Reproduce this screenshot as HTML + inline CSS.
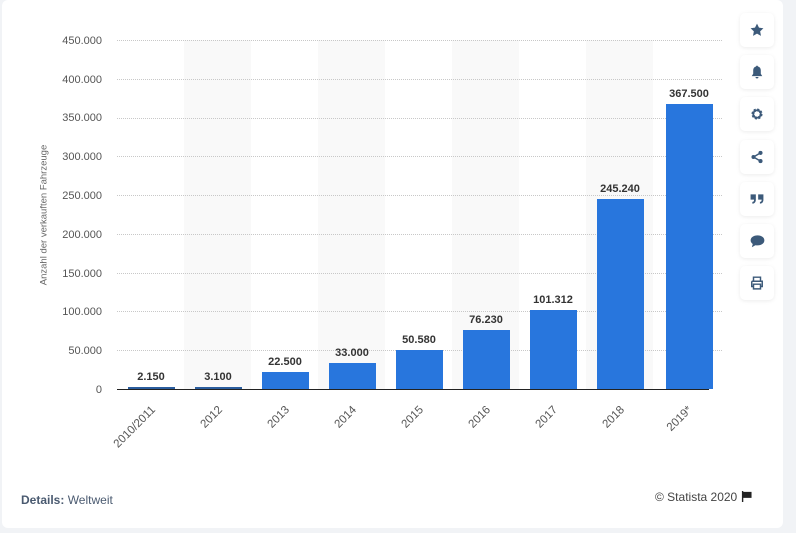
<!DOCTYPE html>
<html><head><meta charset="utf-8"><style>
body{margin:0;width:796px;height:533px;background:#f1f3f6;font-family:"Liberation Sans",sans-serif;position:relative;overflow:hidden}
.card{position:absolute;left:2px;top:0;width:781px;height:528px;background:#fff;border-radius:6px}
.a{position:absolute}
.yl{position:absolute;right:694px;font-size:11px;color:#555;transform:translateY(-50%)}
.g{position:absolute;left:117px;width:605px;border-top:1px dotted #c8c8c8;height:0}
.band{position:absolute;top:40px;height:349px;width:67px;background:#f9f9f9}
.bar{position:absolute;width:47px;background:#2876dd}
.v{position:absolute;width:80px;text-align:center;font-size:11px;font-weight:bold;color:#333}
.xl{position:absolute;font-size:11.5px;color:#555;transform-origin:right top;transform:rotate(-45deg);white-space:nowrap;text-align:right}
.btn{position:absolute;left:740px;width:34px;height:34px;background:#fff;border-radius:5px;box-shadow:0 1px 4px rgba(0,0,0,.08);display:flex;align-items:center;justify-content:center}
</style></head><body>
<div class="card"></div>
<div class="band" style="left:184px"></div>
<div class="band" style="left:318px"></div>
<div class="band" style="left:452px"></div>
<div class="band" style="left:586px"></div>
<div class="g" style="top:40px"></div><div class="yl" style="top:41px">450.000</div>
<div class="g" style="top:79px"></div><div class="yl" style="top:80px">400.000</div>
<div class="g" style="top:118px"></div><div class="yl" style="top:118px">350.000</div>
<div class="g" style="top:156px"></div><div class="yl" style="top:157px">300.000</div>
<div class="g" style="top:195px"></div><div class="yl" style="top:196px">250.000</div>
<div class="g" style="top:234px"></div><div class="yl" style="top:235px">200.000</div>
<div class="g" style="top:273px"></div><div class="yl" style="top:274px">150.000</div>
<div class="g" style="top:311px"></div><div class="yl" style="top:312px">100.000</div>
<div class="g" style="top:350px"></div><div class="yl" style="top:351px">50.000</div>
<div class="yl" style="top:390px">0</div>
<div class="a" style="left:44px;top:215px;transform:translate(-50%,-50%) rotate(-90deg);font-size:9.5px;color:#666;white-space:nowrap">Anzahl der verkauften Fahrzeuge</div>

<div class="bar" style="left:128px;top:387px;height:2px;background:#2a5d9e"></div><div class="v" style="left:111px;top:371px">2.150</div>
<div class="bar" style="left:195px;top:387px;height:2px;background:#2a5d9e"></div><div class="v" style="left:178px;top:371px">3.100</div>
<div class="bar" style="left:262px;top:372px;height:17px"></div><div class="v" style="left:245px;top:356px">22.500</div>
<div class="bar" style="left:329px;top:363px;height:26px"></div><div class="v" style="left:312px;top:347px">33.000</div>
<div class="bar" style="left:396px;top:350px;height:39px"></div><div class="v" style="left:379px;top:334px">50.580</div>
<div class="bar" style="left:463px;top:330px;height:59px"></div><div class="v" style="left:446px;top:314px">76.230</div>
<div class="bar" style="left:530px;top:310px;height:79px"></div><div class="v" style="left:513px;top:294px">101.312</div>
<div class="bar" style="left:597px;top:199px;height:190px"></div><div class="v" style="left:580px;top:183px">245.240</div>
<div class="bar" style="left:666px;top:104px;height:285px"></div><div class="v" style="left:649px;top:88px">367.500</div>
<div class="a" style="left:117px;top:389px;width:592px;height:1px;background:#222"></div>

<div class="xl" style="right:646px;top:404px">2010/2011</div>
<div class="xl" style="right:579px;top:404px">2012</div>
<div class="xl" style="right:512px;top:404px">2013</div>
<div class="xl" style="right:445px;top:404px">2014</div>
<div class="xl" style="right:378px;top:404px">2015</div>
<div class="xl" style="right:311px;top:404px">2016</div>
<div class="xl" style="right:244px;top:404px">2017</div>
<div class="xl" style="right:177px;top:404px">2018</div>
<div class="xl" style="right:110px;top:404px">2019*</div>

<div class="a" style="left:21px;top:493px;font-size:12px;color:#4a5a70"><b>Details:</b> Weltweit</div>
<div class="a" style="left:655px;top:490px;font-size:12px;color:#444">© Statista 2020 <svg width="11" height="11" viewBox="0 0 12 12" style="vertical-align:-1px"><path fill="#222" d="M1 0h1.5v12H1zM2.5 1h9v6.5h-9z"/></svg></div>

<div class="btn" style="top:13px"><svg width="14" height="14" viewBox="0 0 24 24"><path fill="#3c5a7a" d="M12 1l3.4 7 7.6 1-5.6 5.3 1.4 7.7L12 18.3 5.2 22l1.4-7.7L1 9l7.6-1z"/></svg></div>
<div class="btn" style="top:55px"><svg width="14" height="14" viewBox="0 0 24 24"><path fill="#3c5a7a" d="M12 1c-1 0-1.6.7-1.6 1.6C7 3.4 5.5 6 5.5 9.5V15L3 19h18l-2.5-4V9.5C18.5 6 17 3.4 13.6 2.6 13.6 1.7 13 1 12 1zM9.5 20.5a2.5 2.5 0 005 0z"/></svg></div>
<div class="btn" style="top:97px"><svg width="14" height="14" viewBox="0 0 24 24"><circle cx="12" cy="12" r="7" fill="none" stroke="#3c5a7a" stroke-width="5" stroke-dasharray="3.3 2.2"/><circle cx="12" cy="12" r="6.5" fill="none" stroke="#3c5a7a" stroke-width="3"/></svg></div>
<div class="btn" style="top:140px"><svg width="14" height="14" viewBox="0 0 24 24"><g fill="#3c5a7a"><circle cx="18" cy="5" r="3.5"/><circle cx="6" cy="12" r="3.5"/><circle cx="18" cy="19" r="3.5"/></g><path d="M18 5L6 12l12 7" stroke="#3c5a7a" stroke-width="2.5" fill="none"/></svg></div>
<div class="btn" style="top:182px"><svg width="14" height="14" viewBox="0 0 24 24"><path fill="#3c5a7a" d="M1 4h9v9c0 4-2 7-6 7v-3c2 0 3-1.5 3-4H1zM14 4h9v9c0 4-2 7-6 7v-3c2 0 3-1.5 3-4h-6z"/></svg></div>
<div class="btn" style="top:224px"><svg width="15" height="14" viewBox="0 0 24 22"><path fill="#3c5a7a" d="M12 2C5.4 2 1 5.5 1 10c0 2.4 1.3 4.4 3.4 5.8L3 21l5.6-3.3c1.1.2 2.2.3 3.4.3 6.6 0 11-3.5 11-8s-4.4-8-11-8z"/></svg></div>
<div class="btn" style="top:266px"><svg width="14" height="14" viewBox="0 0 24 24"><path fill="none" stroke="#3c5a7a" stroke-width="2.5" d="M6 9V2h12v7M3 9h18v9h-3M6 18H3V9M6 14h12v8H6z"/></svg></div>
</body></html>
